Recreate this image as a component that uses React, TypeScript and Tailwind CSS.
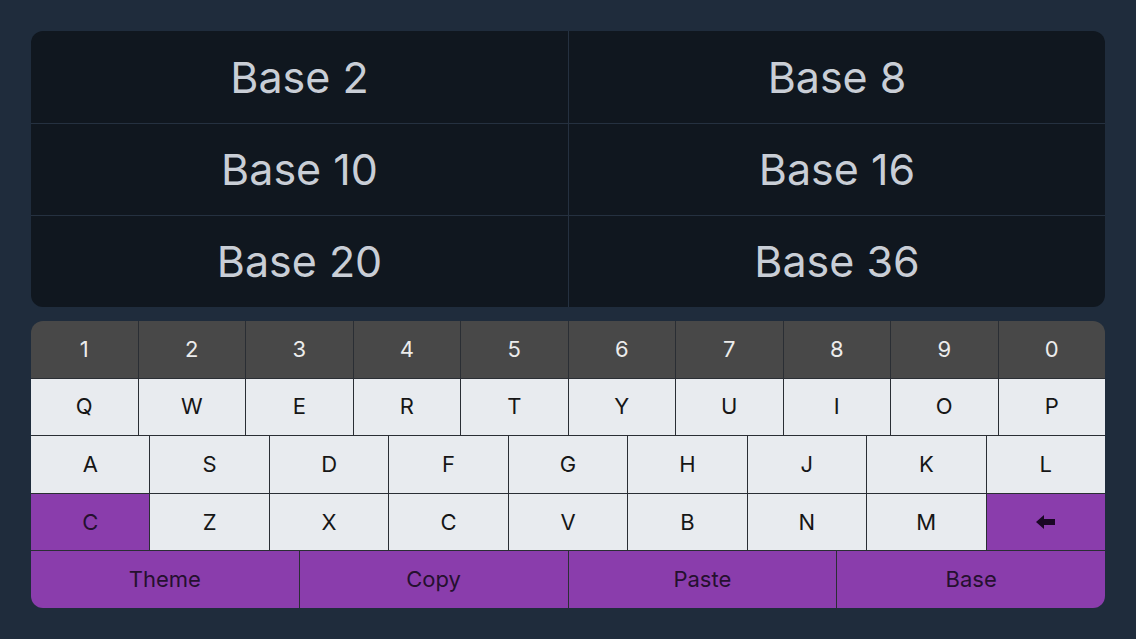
import React from 'react'

const BASES = ['Base 2', 'Base 8', 'Base 10', 'Base 16', 'Base 20', 'Base 36']
const DIGITS = ['1', '2', '3', '4', '5', '6', '7', '8', '9', '0']
const ROW_Q = ['Q', 'W', 'E', 'R', 'T', 'Y', 'U', 'I', 'O', 'P']
const ROW_A = ['A', 'S', 'D', 'F', 'G', 'H', 'J', 'K', 'L']
const ROW_Z = ['Z', 'X', 'C', 'V', 'B', 'N', 'M']
const ACTIONS = ['Theme', 'Copy', 'Paste', 'Base']

type Tone = 'dark' | 'light' | 'purple'

const toneClass: Record<Tone, string> = {
  dark: 'bg-[#484848] text-[#ececec]',
  light: 'bg-[#e8ebef] text-[#161616]',
  purple: 'bg-[#8a3dac] text-[#25102f]',
}

function Key({ label, tone, first }: { label: React.ReactNode; tone: Tone; first?: boolean }) {
  return (
    <div
      className={`flex-1 flex items-center justify-center ${toneClass[tone]} ${
        first ? '' : 'border-l-[1.5px] border-[#2a2e34]'
      }`}
    >
      {label}
    </div>
  )
}

function BackArrow() {
  return (
    <svg width="20" height="14" viewBox="0 0 20 14">
      <path d="M0 7 L8 0 L8 4 L19 4 L19 10 L8 10 L8 14 Z" fill="#1a0724" />
    </svg>
  )
}

export default function App() {
  return (
    <div
      className="h-screen w-full bg-[#1f2c3c] p-[31px] flex flex-col gap-[14px]"
      style={{ fontFamily: 'Inter, "Noto Sans", sans-serif' }}
    >
      {/* base selector */}
      <div className="h-[276px] rounded-[12px] bg-[#10171f] grid grid-cols-2 grid-rows-3 overflow-hidden">
        {BASES.map((b, i) => (
          <div
            key={b}
            className={`flex items-center justify-center text-[43px] text-[#c9ced6] ${
              i % 2 === 1 ? 'border-l-[1.5px] border-[#253140]' : ''
            } ${i >= 2 ? 'border-t-[1.5px] border-t-[#253140]' : ''}`}
          >
            {b}
          </div>
        ))}
      </div>

      {/* keyboard */}
      <div className="flex-1 rounded-[12px] overflow-hidden flex flex-col text-[22px]">
        <div className="flex-1 flex">
          {DIGITS.map((d, i) => (
            <Key key={d} label={d} tone="dark" first={i === 0} />
          ))}
        </div>
        <div className="flex-1 flex border-t-[1.5px] border-[#2a2e34]">
          {ROW_Q.map((k, i) => (
            <Key key={k} label={k} tone="light" first={i === 0} />
          ))}
        </div>
        <div className="flex-1 flex border-t-[1.5px] border-[#2a2e34]">
          {ROW_A.map((k, i) => (
            <Key key={k} label={k} tone="light" first={i === 0} />
          ))}
        </div>
        <div className="flex-1 flex border-t-[1.5px] border-[#2a2e34]">
          <Key label="C" tone="purple" first />
          {ROW_Z.map((k) => (
            <Key key={k} label={k} tone="light" />
          ))}
          <Key label={<BackArrow />} tone="purple" />
        </div>
        <div className="flex-1 flex border-t-[1.5px] border-[#2a2e34]">
          {ACTIONS.map((a, i) => (
            <Key key={a} label={a} tone="purple" first={i === 0} />
          ))}
        </div>
      </div>
    </div>
  )
}
